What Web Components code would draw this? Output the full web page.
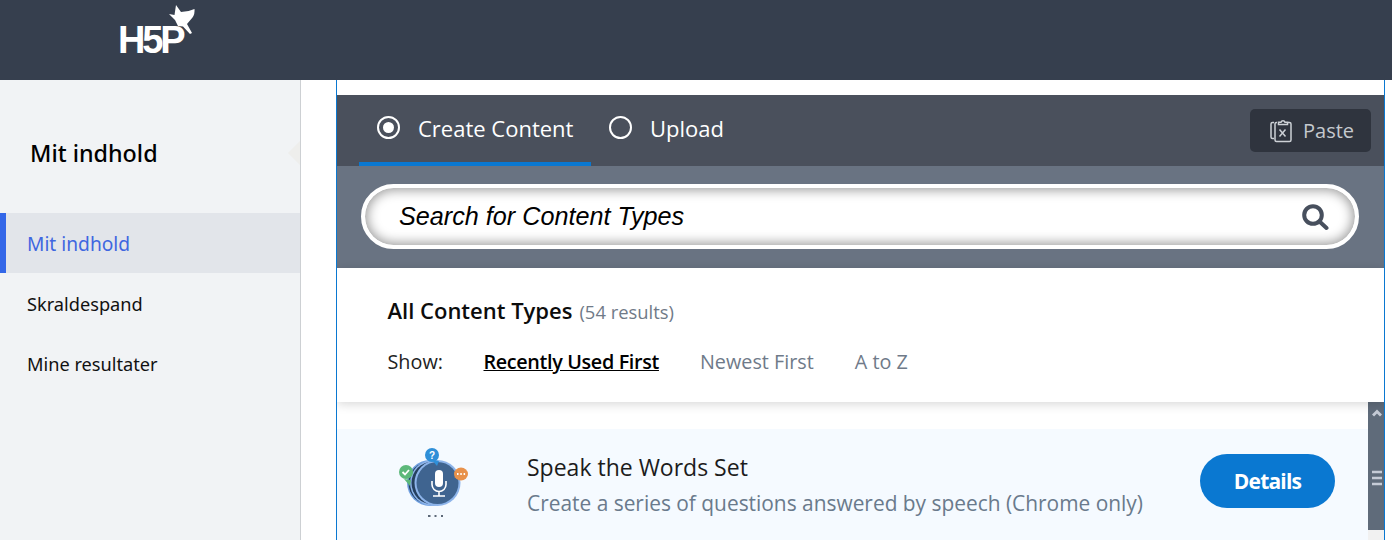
<!DOCTYPE html>
<html>
<head>
<meta charset="utf-8">
<title>H5P</title>
<style>
  html, body { margin: 0; height: 100%; overflow: hidden; background: #fff; }
</style>
</head>
<body>
<app-shell>
  <side-nav slot="side" heading="Mit indhold">
    <nav-item active>Mit indhold</nav-item>
    <nav-item>Skraldespand</nav-item>
    <nav-item>Mine resultater</nav-item>
  </side-nav>
  <hub-panel slot="main">
    <hub-tabs></hub-tabs>
    <search-bar placeholder="Search for Content Types"></search-bar>
    <filter-bar count="54"></filter-bar>
    <content-list>
      <content-row title="Speak the Words Set" desc="Create a series of questions answered by speech (Chrome only)"></content-row>
    </content-list>
  </hub-panel>
</app-shell>

<script>
// helper: every element gets an open shadow root from a html string
class Base extends HTMLElement {
  constructor() {
    super()
    this.attachShadow({ mode: 'open' }).innerHTML = this.render()
  }
  render() { return '' }
}

class AppShell extends Base {
  render() {
    return `
    <style>
      :host { display: flex; flex-direction: column; height: 540px; overflow: hidden; }
      header { height: 80px; flex: none; background: #363f4e; padding-left: 119px; display: flex; }
      .logo { position: relative; width: 80px; height: 80px; }
      .logo span { position: absolute; left: -1px; top: 20px; font: bold 38px/40px "Liberation Sans", sans-serif; letter-spacing: -3.200px; color: #fff; }
      .logo svg { position: absolute; left: 0; top: 0; }
      .body { flex: 1; display: flex; min-height: 0; }
    </style>
    <header>
      <div class="logo">
        <span>H5P</span>
        <svg width="80" height="60" viewBox="0 0 80 60">
          <path fill="#fff" d="M50 14l5.500 1 1.500-10 5 7q7 0 13.500-3q.5 5-2 8.500l-5.500 6.500 5 9-2 1-7-7.500-5-.5-3-6z"/>
        </svg>
      </div>
    </header>
    <div class="body"><slot name="side"></slot><slot name="main"></slot></div>`
  }
}

class SideNav extends Base {
  render() {
    return `
    <style>
      :host { display: block; flex: none; width: 300px; background: #f1f3f5; border-right: 1px solid #cdd0d3; font-family: "Noto Sans", "Liberation Sans", sans-serif; }
      h2 { position: relative; margin: 0; height: 133px; box-sizing: border-box; padding: 57px 0 0 30px; font-size: 23.300px; line-height: 33px; font-weight: 500; color: #000; }
      h2::after { content: ""; position: absolute; right: 0; top: 61px; border: 12px solid transparent; border-right-color: #eeeeec; }
    </style>
    <h2>${this.getAttribute('heading')}</h2>
    <slot></slot>`
  }
}

class NavItem extends Base {
  render() {
    return `
    <style>
      :host { display: flex; align-items: center; height: 60px; box-sizing: border-box; padding: 2px 0 0 27px; font-size: 18.200px; color: #111; }
      :host([active]) { background: #e2e5ea; color: #3f67e0; box-shadow: inset 6px 0 0 #3367e8; font-size: 19.200px; padding-top: 0; }
    </style>
    <slot></slot>`
  }
}

class HubPanel extends Base {
  render() {
    return `
    <style>
      :host { display: block; flex: none; width: 1049px; height: 460px; margin-left: 35px; padding-top: 15px; box-sizing: border-box; border-left: 1px solid #0a78d1; border-right: 1px solid #0a78d1; font-family: "Open Sans", "Liberation Sans", sans-serif; overflow: hidden; }
    </style>
    <slot></slot>`
  }
}

class HubTabs extends Base {
  render() {
    return `
    <style>
      :host { display: flex; align-items: stretch; height: 71px; padding-left: 22px; padding-right: 13px; background: #4a505c; color: #fff; font-size: 22px; white-space: nowrap; }
      .tab { display: flex; align-items: center; gap: 18px; padding: 0 18px; box-sizing: border-box; height: 71px; padding-bottom: 6px; }
      .tab.on { border-bottom: 4px solid #0a78d1; padding-bottom: 2px; width: 232px; }
      .radio { width: 23px; height: 23px; box-sizing: border-box; border: 2.500px solid #fff; border-radius: 50%; display: flex; align-items: center; justify-content: center; flex: none; }
      .on .radio::after { content: ""; width: 11px; height: 11px; border-radius: 50%; background: #fff; }
      .paste { margin: 14px 0 14px auto; width: 121px; height: 43px; box-sizing: border-box; background: #2f343e; border-radius: 5px; color: #c5c9ce; font-size: 20px; display: flex; align-items: center; gap: 9px; padding-left: 19px; }
    </style>
    <div class="tab on"><span class="radio"></span>Create Content</div>
    <div class="tab off"><span class="radio"></span>Upload</div>
    <div class="paste">
      <svg width="25" height="24" viewBox="0 0 25 24" fill="none" stroke="#cdd1d6" stroke-width="1.500">
        <path d="M5 3.500H3.500C2.500 3.500 2 4 2 5v13c0 1 .5 1.500 1.500 1.500H5"/>
        <path d="M8 3.500h-.5C6.500 3.500 6 4 6 5v16c0 1 .5 1.500 1.500 1.500h13c1 0 1.500-.5 1.500-1.500V5c0-1-.5-1.500-1.500-1.500H19"/>
        <path d="M9.500 5.500V3.200h2.500a2.100 2.100 0 0 1 4 0h2.500v2.300z"/>
        <path d="M10.500 10.500l6 7M16.500 10.500l-6 7" stroke-width="1.500"/>
      </svg>
      Paste
    </div>`
  }
}

class SearchBar extends Base {
  render() {
    return `
    <style>
      :host { display: block; height: 102px; box-sizing: border-box; padding: 18px 25px 19px 24px; background: #697382; }
      .box { height: 65px; box-sizing: border-box; border: 4px solid #fff; border-radius: 33px; background: #fff; box-shadow: inset 0 0 12px 2px #9a9a9a; display: flex; align-items: center; padding: 0 26px 0 34px; font: italic 25.200px "Liberation Sans", sans-serif; color: #000; }
      span { flex: 1; }
    </style>
    <div class="box">
      <span>${this.getAttribute('placeholder')}</span>
      <svg width="28" height="28" viewBox="0 0 28 28" fill="none" stroke="#474f5d">
        <circle cx="12" cy="12" r="8.800" stroke-width="4"/>
        <path d="M18.500 18.500l7 6.500" stroke-width="4" stroke-linecap="round"/>
      </svg>
    </div>`
  }
}

class FilterBar extends Base {
  render() {
    return `
    <style>
      :host { display: block; position: relative; z-index: 1; height: 134px; box-sizing: border-box; padding: 27px 0 0 50.500px; background: #fff; color: #111; box-shadow: 0 2px 10px rgba(0,0,0,.16); }
      .head { display: flex; align-items: baseline; gap: 7px; height: 38px; font-size: 22px; font-weight: 600; color: #0c0c0c; }
      .head small { font-size: 18.400px; font-weight: 400; color: #707a88; }
      .show { display: flex; align-items: baseline; margin-top: 15px; font-size: 19.800px; color: #6f7a89; }
      .show b { font-weight: 400; color: #222; width: 96px; }
      .show a { margin-right: 41px; }
      .show a.on { color: #000; font-weight: 600; text-decoration: underline; letter-spacing: -.35px; }
    </style>
    <div class="head">All Content Types <small>(${this.getAttribute('count')} results)</small></div>
    <div class="show"><b>Show:</b><a class="on">Recently Used First</a><a>Newest First</a><a>A to Z</a></div>`
  }
}

class ContentList extends Base {
  render() {
    return `
    <style>
      :host { display: flex; height: 138px; background: #fff; }
      .rows { flex: 1; padding-top: 27px; min-width: 0; }
      .bar { flex: none; width: 16px; height: 128px; background: #5f6b7a; position: relative; box-shadow: 0 128px 0 #f1f1f1; }
      .bar svg { position: absolute; left: 4px; }
    </style>
    <div class="rows"><slot></slot></div>
    <div class="bar">
      <svg style="top:7px" width="10" height="8" viewBox="0 0 10 8"><path d="M1 6.500l4-4 4 4" fill="none" stroke="#c5cbd6" stroke-width="3"/></svg>
      <svg style="top:68px" width="10" height="16" viewBox="0 0 10 16"><path d="M0 2h10M0 8h10M0 14h10" stroke="#c5cbd6" stroke-width="2.500"/></svg>
    </div>`
  }
}

class ContentRow extends Base {
  render() {
    return `
    <style>
      :host { display: flex; height: 111px; background: #f5faff; padding-left: 60px; }
      svg { flex: none; margin-top: 14px; }
      .text { margin-left: 50px; padding-top: 21px; flex: 1; white-space: nowrap; }
      h3 { margin: 0; font-size: 23px; line-height: 34px; font-weight: 500; color: #1c1c1c; }
      p { margin: 2px 0 0; font-size: 20.900px; line-height: 34px; color: #6a7a8c; }
      button { flex: none; width: 135px; height: 54px; margin: 25px 33px 0 0; border: 0; border-radius: 27px; background: #0a78d1; color: #fff; font: 700 21px "Open Sans", "Liberation Sans", sans-serif; letter-spacing: -.8px; }
    </style>
    <svg width="80" height="80" viewBox="0 0 80 80">
      <circle cx="33" cy="40" r="23" fill="#6f9fe0"/>
      <circle cx="33" cy="40" r="21.500" fill="#26405f"/>
      <circle cx="36" cy="40" r="23" fill="#8db4ea"/>
      <circle cx="36" cy="40" r="21.500" fill="#26405f"/>
      <circle cx="40.500" cy="40" r="23" fill="#8db4ea"/>
      <circle cx="40.500" cy="40" r="21" fill="#3f6490"/>
      <rect x="38" y="27" width="8" height="17" rx="4" fill="#fff"/>
      <path d="M35 38v3.500a7 7 0 0 0 14 0V38M42 49v4M36 53h12" fill="none" stroke="#fff" stroke-width="1.600"/>
      <path d="M7 36l7 1-1 6z" fill="#5cb87a"/><circle cx="9" cy="29" r="7" fill="#5cb87a"/>
      <path d="M5.500 29l2.500 2.500 4-4.500" fill="none" stroke="#fff" stroke-width="1.800"/>
      <path d="M35 17l7 1-2 5z" fill="#2f8fd8"/><circle cx="35" cy="12" r="7" fill="#2f8fd8"/>
      <text x="35" y="15.500" text-anchor="middle" font-family="Liberation Sans" font-weight="bold" font-size="10" fill="#fff">?</text>
      <path d="M57 34l7 3 0-6z" fill="#e8924c"/><ellipse cx="64" cy="31" rx="7" ry="6.500" fill="#e8924c"/>
      <path d="M60 31h1.500M63.300 31h1.500M66.600 31h1.500" stroke="#fff" stroke-width="2.200"/>
      <path d="M31 73h2.500M37.500 73h2M44 73h2" stroke="#5d6878" stroke-width="2"/>
    </svg>
    <div class="text">
      <h3>${this.getAttribute('title')}</h3>
      <p>${this.getAttribute('desc')}</p>
    </div>
    <button>Details</button>`
  }
}

customElements.define('app-shell', AppShell)
customElements.define('side-nav', SideNav)
customElements.define('nav-item', NavItem)
customElements.define('hub-panel', HubPanel)
customElements.define('hub-tabs', HubTabs)
customElements.define('search-bar', SearchBar)
customElements.define('filter-bar', FilterBar)
customElements.define('content-list', ContentList)
customElements.define('content-row', ContentRow)
</script>
</body>
</html>
